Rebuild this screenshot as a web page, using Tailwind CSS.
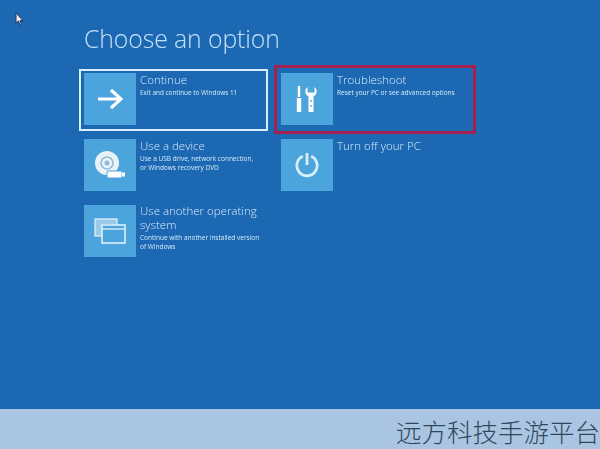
<!DOCTYPE html>
<html lang="zh">
<head>
<meta charset="utf-8">
<script src="https://cdn.jsdelivr.net/npm/@tailwindcss/browser@4"></script>
</head>
<body class="m-0">
<div class="w-[600px] h-[449px] overflow-hidden flex flex-col font-['Open_Sans',sans-serif] bg-[#1d68b3] relative">
  <svg class="absolute left-[15px] top-[12px]" width="9" height="14" viewBox="0 0 9 14"><path d="M1 1v10l2.500-2 1.500 4 1.500-.6L5 8.600h3z" fill="#e8edf2" stroke="#26394f" stroke-width="1"/></svg>
  <main class="h-[409px] pl-[84px] pt-[21px] shrink-0 blur-[0.35px]">
    <h1 class="text-[24.8px] leading-[34px] font-light text-[#c3e2f7] m-0 -tracking-[0.1px]">Choose an option</h1>
    <div class="grid grid-cols-[197px_197px] auto-rows-[66px] mt-[18px]">
      <div class="relative flex gap-[4px]">
        <div class="absolute left-[-5px] top-[-4px] w-[189px] h-[62px] border-2 border-[#d9eef9]"></div>
        <div class="w-[52px] h-[52px] bg-[#4ca4dd] flex items-center justify-center shrink-0">
          <svg width="26" height="22" viewBox="0 0 26 22" fill="none" stroke="#fff" stroke-width="3.200"><path d="M1 11h22M14 2l10 9-10 9"/></svg>
        </div>
        <div class="text-[#d6ecf9] -mt-[1px]">
          <div class="text-[11.5px] leading-[15px] font-light">Continue</div>
          <div class="text-[6.4px] leading-[9px] mt-[1px]">Exit and continue to Windows 11</div>
        </div>
      </div>
      <div class="relative flex gap-[4px]">
        <div class="absolute left-[-7px] top-[-8px] w-[202px] h-[69px] border-[3px] border-[#a3204f]"></div>
        <div class="w-[52px] h-[52px] bg-[#4ca4dd] flex items-center justify-center shrink-0">
          <svg width="22" height="26" viewBox="0 0 22 26" fill="#fff"><path d="M1.800 0h2.400v11H1.800zM.8 12h4.400v14H.8z"/><path d="M11.500 1c-3 2-3 7.500 1 9.500V26h5V10.500c4-2 4-7.500 1-9.500v5.500h-7z"/><path d="M14.300 14h1.400v2h-1.400zM14.300 19h1.400v2h-1.400z" fill="#4ca4dd"/></svg>
        </div>
        <div class="text-[#d6ecf9] -mt-[1px]">
          <div class="text-[11.5px] leading-[15px] font-light">Troubleshoot</div>
          <div class="text-[6.5px] leading-[9px] mt-[1px]">Reset your PC or see advanced options</div>
        </div>
      </div>
      <div class="flex gap-[4px]">
        <div class="w-[52px] h-[52px] bg-[#4ca4dd] flex items-center justify-center shrink-0">
          <svg width="34" height="32" viewBox="0 0 34 32"><circle cx="14" cy="14" r="12" fill="#e9f2f8"/><circle cx="14" cy="14" r="6" fill="none" stroke="#8fb9d8" stroke-width="1.500"/><circle cx="14" cy="14" r="2.500" fill="#8fb9d8"/><rect x="14" y="22" width="15" height="7" rx="1" fill="#fff" stroke="#4ca4dd"/><rect x="29" y="23.500" width="3" height="4" fill="#fff"/></svg>
        </div>
        <div class="text-[#d6ecf9] -mt-[1px]">
          <div class="text-[11.5px] leading-[15px] font-light">Use a device</div>
          <div class="text-[6.5px] leading-[9px] mt-[1px]">Use a USB drive, network connection,<br>or Windows recovery DVD</div>
        </div>
      </div>
      <div class="flex gap-[4px]">
        <div class="w-[52px] h-[52px] bg-[#4ca4dd] flex items-center justify-center shrink-0">
          <svg width="24" height="26" viewBox="0 0 26 28" fill="none" stroke="#d9eef9" stroke-width="3"><path d="M8.500 4.600a11 11 0 1 0 9 0"/><path d="M13 1v13"/></svg>
        </div>
        <div class="text-[#d6ecf9] -mt-[1px]">
          <div class="text-[11.5px] leading-[15px] font-light">Turn off your PC</div>
        </div>
      </div>
      <div class="flex gap-[4px] col-span-1">
        <div class="w-[52px] h-[52px] bg-[#4ca4dd] flex items-center justify-center shrink-0">
          <svg width="32" height="26" viewBox="0 0 32 26" fill="none"><path d="M1 1h22v5H8v12H1z" fill="#9ccbea"/><rect x="1" y="1" width="22" height="17" stroke="#d9eef9" stroke-width="1.300"/><rect x="8" y="7" width="23" height="18" fill="#4ca4dd" stroke="#e6f3fb" stroke-width="1.500"/><path d="M8 11h23" stroke="#e6f3fb" stroke-width="1.300"/></svg>
        </div>
        <div class="text-[#d6ecf9] -mt-[1px] w-[132px]">
          <div class="text-[11.5px] leading-[14px] font-light">Use another operating system</div>
          <div class="text-[6.5px] leading-[9px] mt-[1px]">Continue with another installed version<br>of Windows</div>
        </div>
      </div>
    </div>
  </main>
  <footer class="flex-1 bg-[#a9c5e1] flex items-center justify-end overflow-hidden">
    <span class="text-[25.5px] leading-none whitespace-nowrap text-[#33475c] font-['Noto_Sans_CJK_SC',sans-serif] font-light mt-[3px]">远方科技手游平台</span>
  </footer>
</div>
</body>
</html>
